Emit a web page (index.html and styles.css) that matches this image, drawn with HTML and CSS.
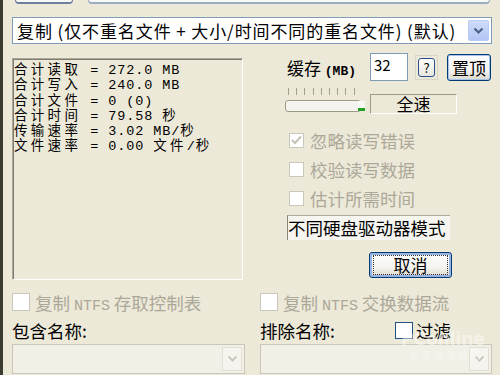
FILE: index.html
```html
<!DOCTYPE html>
<html lang="zh-CN">
<head>
  <meta charset="UTF-8">
  <title>复制</title>
  <link rel="stylesheet" href="styles.css">
</head>
<body>
<div class="win">

  <div class="tabs">
    <div class="tab tab1"></div>
    <div class="tab tab2"></div>
  </div>

  <div class="combo">
    <span class="combo-text">复制 (仅不重名文件 + 大小/时间不同的重名文件) (默认)</span>
    <span class="drop">
      <svg width="11" height="8" viewBox="0 0 11 8"><path d="M1.5 1.5 L5.5 5.5 L9.5 1.5" fill="none" stroke="#4d6185" stroke-width="2.2"/></svg>
    </span>
  </div>

  <div class="main">
    <div class="stats">
      <div class="stats-text">
        <div><span class="cj">合计读取</span> = 272.0 MB</div>
        <div><span class="cj">合计写入</span> = 240.0 MB</div>
        <div><span class="cj">合计文件</span> = 0 (0)</div>
        <div><span class="cj">合计时间</span> = 79.58 <span class="cj">秒</span></div>
        <div><span class="cj">传输速率</span> = 3.02 MB/<span class="cj">秒</span></div>
        <div><span class="cj">文件速率</span> = 0.00 <span class="cj">文件</span>/<span class="cj">秒</span></div>
      </div>
    </div>

    <div class="side">
      <div class="row-buf">
        <span class="buf-label">缓存 <span class="small">(MB)</span></span>
        <span class="num-input">32</span>
        <span class="help-btn"><span class="help-inner">?</span></span>
        <span class="xp-btn top-btn">置顶</span>
      </div>

      <div class="row-speed">
        <div class="slider">
          <div class="ticks"></div>
          <div class="track"><span class="thumb"></span></div>
        </div>
        <div class="speed-box">全速</div>
      </div>

      <div class="check-row first">
        <span class="cb cb-checked">
          <svg width="11" height="10" viewBox="0 0 11 10"><path d="M1 5 L4 8 L10 1.5" fill="none" stroke="#c4c2b5" stroke-width="2"/></svg>
        </span>
        <span class="cb-text">忽略读写错误</span>
      </div>
      <div class="check-row">
        <span class="cb"></span>
        <span class="cb-text">校验读写数据</span>
      </div>
      <div class="check-row">
        <span class="cb"></span>
        <span class="cb-text">估计所需时间</span>
      </div>

      <div class="mode-box">不同硬盘驱动器模式</div>

      <div class="xp-btn cancel-btn"><span class="focus">取消</span></div>
    </div>
  </div>

  <div class="bottom">
    <div class="col">
      <div class="ntfs-row">
        <span class="cb big"></span>
        <span class="cb-text">复制 <span class="mono">NTFS</span> 存取控制表</span>
      </div>
      <div class="name-row">包含名称:</div>
      <div class="combo-off"><span class="drop-off">
        <svg width="11" height="8" viewBox="0 0 11 8"><path d="M1.5 1.5 L5.5 5.5 L9.5 1.5" fill="none" stroke="#c9c7ba" stroke-width="2"/></svg>
      </span></div>
    </div>
    <div class="col col-right">
      <div class="ntfs-row">
        <span class="cb big"></span>
        <span class="cb-text">复制 <span class="mono">NTFS</span> 交换数据流</span>
      </div>
      <div class="name-row">
        <span>排除名称:</span>
        <span class="cb filter-cb"></span>
        <span>过滤</span>
      </div>
      <div class="combo-off"><span class="drop-off">
        <svg width="11" height="8" viewBox="0 0 11 8"><path d="M1.5 1.5 L5.5 5.5 L9.5 1.5" fill="none" stroke="#c9c7ba" stroke-width="2"/></svg>
      </span></div>
    </div>
  </div>

  <div class="watermark">
    <div class="wm-logo">PConline</div>
    <div class="wm-cn">太 平 洋 电 脑 网</div>
  </div>
</div>
</body>
</html>
```

FILE: styles.css
```css
body {
    margin: 0;
    width: 500px;
    height: 375px;
    overflow: hidden;
    background-color: #ece9d8;
    font-family: "Noto Sans CJK SC", "DejaVu Sans", sans-serif;
    color: #000;
}

.win {
    position: relative;
    height: 375px;
    box-sizing: border-box;
    border-left: 3px solid #3d3c30;
    padding-left: 9px;
    overflow: hidden;
}

/* tabs cut off at the top */
.tabs {
    display: flex;
    height: 5px;
    overflow: hidden;
}
.tab {
    height: 30px;
    margin-top: -26px;
    box-sizing: border-box;
    border-radius: 4px;
    background-color: #f8f8f4;
}
.tab1 {
    margin-left: 3px;
    width: 58px;
    border: 1px solid #6d7f9c;
    border-bottom-width: 2px;
}
.tab2 {
    margin-left: 15px;
    width: 402px;
    border: 1px solid #9eacc2;
    border-bottom-width: 2px;
}

.combo {
    margin-top: 12px;
    width: 480px;
    height: 27px;
    box-sizing: border-box;
    border: 1px solid #7f9db9;
    background: #fff;
    display: flex;
    align-items: center;
    justify-content: space-between;
}
.combo-text {
    padding-left: 4px;
    font-size: 17px;
    letter-spacing: 0.9px;
    line-height: 25px;
    white-space: nowrap;
}
.drop {
    width: 21px;
    height: 21px;
    margin-right: 2px;
    box-sizing: border-box;
    border: 1px solid #b9cbf3;
    border-radius: 2px;
    background: linear-gradient(#cfdcfb, #b2c6f4);
    display: flex;
    align-items: center;
    justify-content: center;
}

.main {
    display: flex;
    margin-top: 9px;
}

.stats {
    margin-top: 5px;
    width: 231px;
    height: 222px;
    box-sizing: border-box;
    border-top: 1px solid #aca899;
    border-left: 1px solid #aca899;
    border-right: 1px solid #fff;
    border-bottom: 1px solid #fff;
    box-shadow: inset 1px 1px 0 #7e7c70;
    overflow: hidden;
}
.stats-text {
    padding: 3px 0 0 1px;
    font-family: "Liberation Mono", "Noto Sans CJK SC", monospace;
    font-size: 13.5px;
    letter-spacing: 0.9px;
    line-height: 13.3px;
    white-space: nowrap;
}
.cj {
    font-family: "Noto Sans CJK SC", sans-serif;
    letter-spacing: 3.3px;
}

.side {
    margin-left: 42px;
    width: 207px;
}

.row-buf {
    display: flex;
    align-items: center;
    height: 28px;
}
.buf-label {
    margin-left: 2px;
    width: 83px;
    font-size: 17px;
    white-space: nowrap;
}
.small {
    font-family: "Liberation Mono", monospace;
    font-size: 13px;
    font-weight: bold;
}
.num-input {
    width: 38px;
    height: 28px;
    box-sizing: border-box;
    border: 1px solid #7f9db9;
    background: #fff;
    font-size: 15px;
    line-height: 22px;
    padding-left: 3px;
}
.help-btn {
    margin-left: 7px;
    width: 23px;
    height: 25px;
    box-sizing: border-box;
    border: 1px solid #d8d5c6;
    display: flex;
    align-items: center;
    justify-content: center;
}
.help-inner {
    width: 17px;
    height: 19px;
    box-sizing: border-box;
    border: 1px solid #2c4f8f;
    border-radius: 3px;
    background: linear-gradient(#ffffff, #e6e5dd);
    font-size: 13px;
    line-height: 17px;
    text-align: center;
}
.xp-btn {
    box-sizing: border-box;
    border: 1px solid #003c74;
    border-radius: 3px;
    background: linear-gradient(#ffffff, #f4f3ee 60%, #dcd9cb);
    box-shadow: inset 0 0 0 1px #a9c3ec;
    display: flex;
    align-items: center;
    justify-content: center;
    font-size: 17px;
}
.top-btn {
    margin-left: 9px;
    width: 44px;
    height: 27px;
}

.row-speed {
    display: flex;
    margin-top: 7px;
    height: 26px;
}
.slider {
    width: 80px;
}
.ticks {
    margin-left: 3px;
    width: 74px;
    height: 7px;
    background: repeating-linear-gradient(90deg, #a3a08f 0 1px, transparent 1px 8.2px);
}
.track {
    position: relative;
    margin-top: 5px;
    width: 76px;
    height: 12px;
    box-sizing: border-box;
    border: 1px solid #9d9a8a;
    border-radius: 3px;
    background: #f4f3ee;
}
.thumb {
    position: absolute;
    right: -5px;
    top: 0;
    width: 7px;
    height: 10px;
    border-bottom: 3px solid #21a121;
    box-sizing: border-box;
    background: #f7f7f4;
}
.speed-box {
    margin-left: 5px;
    margin-top: 6px;
    width: 87px;
    height: 20px;
    box-sizing: border-box;
    border-top: 1px solid #9d9a8a;
    border-left: 1px solid #9d9a8a;
    border-right: 1px solid #fff;
    border-bottom: 1px solid #fff;
    text-align: center;
    font-size: 17px;
    line-height: 18px;
}

.check-row {
    display: flex;
    align-items: center;
    margin-top: 13px;
    margin-left: 4px;
    height: 16px;
}
.check-row.first {
    margin-top: 18px;
}
.cb {
    width: 15px;
    height: 15px;
    box-sizing: border-box;
    border: 1px solid #cac8bb;
    background: #fff;
    display: inline-flex;
    align-items: center;
    justify-content: center;
    flex-shrink: 0;
}
.cb-text {
    margin-left: 6px;
    color: #aca899;
    font-size: 17.5px;
    white-space: nowrap;
}
.mono {
    font-family: "Liberation Mono", monospace;
    font-size: 15px;
}

.mode-box {
    margin-top: 9px;
    margin-left: 2px;
    width: 163px;
    height: 25px;
    box-sizing: border-box;
    border-top: 1px solid #aca899;
    border-left: 1px solid #8a877a;
    background: #f6f5f0;
    font-size: 17.5px;
    line-height: 23px;
    white-space: nowrap;
}

.cancel-btn {
    margin-top: 12px;
    margin-left: 84px;
    width: 83px;
    height: 26px;
    box-shadow: inset 0 0 0 2px #98b4e4;
}
.focus {
    width: 73px;
    height: 18px;
    border: 1px dotted #333;
    text-align: center;
    line-height: 18px;
}

.bottom {
    display: flex;
    margin-top: 12px;
}
.col {
    width: 233px;
}
.col-right {
    margin-left: 15px;
    width: 232px;
}
.ntfs-row {
    display: flex;
    align-items: center;
    height: 20px;
}
.cb.big {
    width: 18px;
    height: 18px;
}
.ntfs-row .cb-text {
    margin-left: 5px;
    font-size: 17.5px;
}
.name-row {
    display: flex;
    align-items: center;
    margin-top: 10px;
    height: 17px;
    font-size: 17.5px;
}
.filter-cb {
    margin-left: 60px;
    width: 18px;
    height: 17px;
    border-color: #1c5180;
    margin-right: 3px;
}
.combo-off {
    margin-top: 5px;
    height: 30px;
    box-sizing: border-box;
    border: 1px solid #c9c7ba;
    background: #f1efe6;
    display: flex;
    justify-content: flex-end;
    align-items: center;
}
.drop-off {
    width: 20px;
    height: 24px;
    margin-right: 2px;
    box-sizing: border-box;
    border: 1px solid #e2e0d6;
    background: #f5f4ef;
    display: flex;
    align-items: center;
    justify-content: center;
}

.watermark {
    position: absolute;
    left: 398px;
    top: 330px;
    color: #fff;
    opacity: 0.45;
    font-family: "DejaVu Sans", sans-serif;
    white-space: nowrap;
}
.wm-logo {
    font-size: 17px;
    font-weight: bold;
    line-height: 18px;
}
.wm-cn {
    margin-left: 8px;
    font-family: "Noto Sans CJK SC", sans-serif;
    font-size: 10px;
    line-height: 14px;
}
```
